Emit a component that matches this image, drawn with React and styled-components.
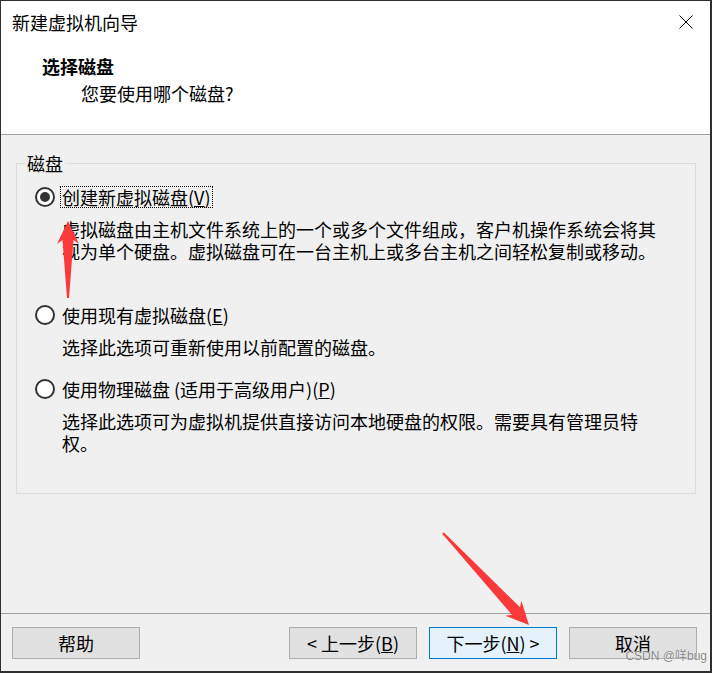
import React from "react";
import styled, { createGlobalStyle } from "styled-components";

const Global = createGlobalStyle`
  html, body { margin: 0; padding: 0; background: #f0f0f0; }
  * { box-sizing: border-box; }
  body { font-family: "Noto Sans CJK SC", "Noto Sans", sans-serif; }
`;

const Window = styled.div`
  position: relative;
  width: 712px;
  height: 673px;
  border: 1px solid #2f2f2f;
  border-right-width: 2px;
  border-bottom-width: 2px;
  background: #f0f0f0;
  display: flex;
  flex-direction: column;
  color: #000;
  font-size: 18px;
  overflow: hidden;
`;

const Header = styled.header`
  height: 134px;
  flex: none;
  background: #fff;
  border-bottom: 1px solid #a0a0a0;
`;

const TitleBar = styled.div`
  height: 42px;
  display: flex;
  align-items: center;
  justify-content: space-between;
  padding: 0 17px 0 11px;
  line-height: 26px;
`;

const WindowTitle = styled.span`
  font-size: 18px;
  margin-top: -1px;
`;

const CloseButton = styled.span`
  display: flex;
  width: 14px;
  height: 14px;
`;

const Heading = styled.div`
  margin-top: 10px;
  padding-left: 41px;
  line-height: 26px;
`;

const HeadingTitle = styled.div`
  font-weight: bold;
`;

const HeadingSub = styled.div`
  padding-left: 39px;
  margin-top: 1px;
`;

const Content = styled.main`
  flex: 1;
  padding: 0 14px 0 15px;
`;

const Group = styled.fieldset`
  margin: 17px 0 0 0;
  padding: 12px 0 0 0;
  height: 342px;
  border: 1px solid #dcdcdc;
  min-width: 0;
`;

const Legend = styled.legend`
  margin-left: 8px;
  padding: 0 2px;
  line-height: 22px;
  font-size: 18px;
`;

const Option = styled.div`
  margin-bottom: ${(p) => p.$gap}px;
`;

const OptionRow = styled.div`
  display: flex;
  align-items: center;
  height: 22px;
  margin-left: 18px;
`;

const Radio = styled.span`
  width: 20px;
  height: 20px;
  border-radius: 50%;
  border: 2px solid #333;
  background: #fff;
  display: flex;
  align-items: center;
  justify-content: center;
  flex: none;
  &::after {
    content: "";
    width: 10px;
    height: 10px;
    border-radius: 50%;
    background: ${(p) => (p.$checked ? "#333" : "transparent")};
  }
`;

const OptionLabel = styled.span`
  margin-left: 5px;
  padding: 0 1px;
  line-height: 20px;
  border: 1px dotted ${(p) => (p.$focused ? "#000" : "transparent")};
  white-space: nowrap;
`;

const Description = styled.p`
  margin: ${(p) => p.$top}px 0 0 45px;
  line-height: 22px;
  min-height: ${(p) => p.$lines * 22}px;
  white-space: nowrap;
`;

const Footer = styled.footer`
  flex: none;
  border-top: 1px solid #a0a0a0;
  padding: 13px 13px 12px 11px;
  display: flex;
  gap: 12px;
`;

const Button = styled.button`
  width: 128px;
  height: 32px;
  border: 1px solid ${(p) => (p.$primary ? "#0078d7" : "#adadad")};
  background: ${(p) => (p.$primary ? "#e5f1fb" : "#e1e1e1")};
  font-family: "Noto Sans CJK SC", "Noto Sans", sans-serif;
  font-size: 18px;
  color: #000;
  padding: 0;
  line-height: 26px;
  &:first-child {
    margin-right: auto;
  }
`;

const Watermark = styled.span`
  position: absolute;
  right: 3px;
  bottom: 8px;
  font-family: "Liberation Sans", "Noto Sans CJK SC", sans-serif;
  font-size: 12px;
  color: rgba(120, 120, 120, 0.9);
  text-shadow: 0 0 1px #fff;
  pointer-events: none;
`;

const Overlay = styled.svg`
  position: absolute;
  left: -1px;
  top: -1px;
  pointer-events: none;
`;

function Arrow({ from, to }) {
  const dx = to[0] - from[0];
  const dy = to[1] - from[1];
  const L = Math.sqrt(dx * dx + dy * dy);
  const deg = (Math.atan2(dy, dx) * 180) / Math.PI;
  const pts = [
    [0, -1],
    [L - 19, -5.5],
    [L - 23, -11],
    [L, 0],
    [L - 23, 11],
    [L - 19, 5.5],
    [0, 1],
  ]
    .map((p) => p.join(","))
    .join(" ");
  return (
    <polygon
      points={pts}
      fill="#fa3a3a"
      transform={`translate(${from[0]},${from[1]}) rotate(${deg})`}
    />
  );
}

export default function App() {
  return (
    <>
      <Global />
      <Window>
        <Header>
          <TitleBar>
            <WindowTitle>新建虚拟机向导</WindowTitle>
            <CloseButton>
              <svg width="14" height="14" viewBox="0 0 14 14">
                <path d="M0.5 0.5 L13.5 13.5 M13.5 0.5 L0.5 13.5" stroke="#000" strokeWidth="1" fill="none" />
              </svg>
            </CloseButton>
          </TitleBar>
          <Heading>
            <HeadingTitle>选择磁盘</HeadingTitle>
            <HeadingSub>您要使用哪个磁盘?</HeadingSub>
          </Heading>
        </Header>
        <Content>
          <Group>
            <Legend>磁盘</Legend>
            <Option $gap={20}>
              <OptionRow>
                <Radio $checked />
                <OptionLabel $focused>
                  创建新虚拟磁盘(<u>V</u>)
                </OptionLabel>
              </OptionRow>
              <Description $lines={3} $top={10}>
                虚拟磁盘由主机文件系统上的一个或多个文件组成，客户机操作系统会将其
                <br />
                视为单个硬盘。虚拟磁盘可在一台主机上或多台主机之间轻松复制或移动。
              </Description>
            </Option>
            <Option $gap={20}>
              <OptionRow>
                <Radio />
                <OptionLabel>
                  使用现有虚拟磁盘(<u>E</u>)
                </OptionLabel>
              </OptionRow>
              <Description $lines={1} $top={10}>
                选择此选项可重新使用以前配置的磁盘。
              </Description>
            </Option>
            <Option $gap={0}>
              <OptionRow>
                <Radio />
                <OptionLabel>
                  使用物理磁盘 (适用于高级用户)(<u>P</u>)
                </OptionLabel>
              </OptionRow>
              <Description $lines={2} $top={10}>
                选择此选项可为虚拟机提供直接访问本地硬盘的权限。需要具有管理员特
                <br />
                权。
              </Description>
            </Option>
          </Group>
        </Content>
        <Footer>
          <Button>帮助</Button>
          <Button>
            &lt; 上一步(<u>B</u>)
          </Button>
          <Button $primary>
            下一步(<u>N</u>) &gt;
          </Button>
          <Button>取消</Button>
        </Footer>
        <Watermark>CSDN @咩bug</Watermark>
        <Overlay width="712" height="673" viewBox="0 0 712 673">
          <Arrow from={[68, 298]} to={[68, 221]} />
          <Arrow from={[443, 533]} to={[529, 625]} />
        </Overlay>
      </Window>
    </>
  );
}
